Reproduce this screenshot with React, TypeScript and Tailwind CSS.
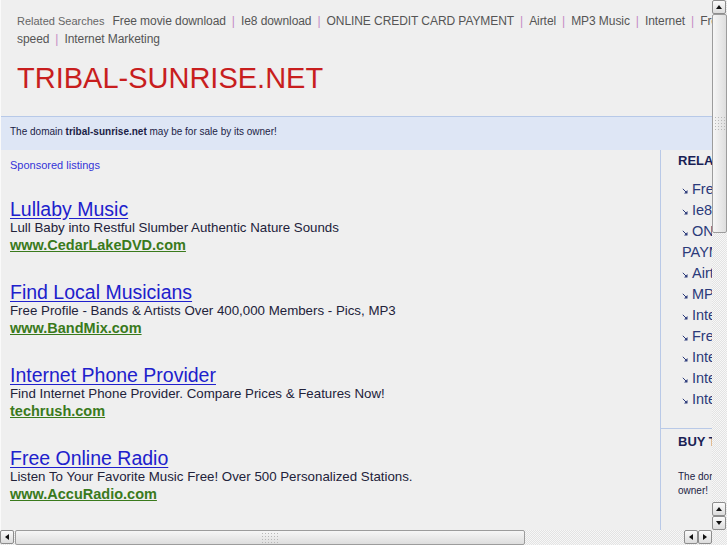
const topLinks = [
  "Free movie download",
  "Ie8 download",
  "ONLINE CREDIT CARD PAYMENT",
  "Airtel",
  "MP3 Music",
  "Internet",
  "Free internet",
];

const sideLinks = [
  "Free movie download",
  "Ie8 download",
  "ONLINE CREDIT CARD PAYMENT",
  "Airtel",
  "MP3 Music",
  "Internet",
  "Free internet speed",
  "Internet Marketing",
  "Internet Service",
  "Internet TV",
];

const ads = [
  {
    title: "Lullaby Music",
    text: "Lull Baby into Restful Slumber Authentic Nature Sounds",
    url: "www.CedarLakeDVD.com",
  },
  {
    title: "Find Local Musicians",
    text: "Free Profile - Bands & Artists Over 400,000 Members - Pics, MP3",
    url: "www.BandMix.com",
  },
  {
    title: "Internet Phone Provider",
    text: "Find Internet Phone Provider. Compare Prices & Features Now!",
    url: "techrush.com",
  },
  {
    title: "Free Online Radio",
    text: "Listen To Your Favorite Music Free! Over 500 Personalized Stations.",
    url: "www.AccuRadio.com",
  },
];

const Sep = () => <span className="px-[6px] text-[#c58cc5]">|</span>;

const Arrow = ({ dir }: { dir: "up" | "down" | "left" | "right" }) => {
  const pts = {
    up: "1,6 4,2 7,6",
    down: "1,2 4,6 7,2",
    left: "6,1 2,4 6,7",
    right: "2,1 6,4 2,7",
  }[dir];
  return (
    <div className="flex items-center justify-center w-[14px] h-[14px] rounded-[2px] border border-[#8d8d8d] bg-gradient-to-b from-[#fbfbfb] to-[#dcdcdc]">
      <svg width="8" height="8" viewBox="0 0 8 8">
        <polygon points={pts} fill="#111" />
      </svg>
    </div>
  );
};

const Grip = ({ rows, cols }: { rows: number; cols: number }) => (
  <div
    className="grid gap-[2px]"
    style={{ gridTemplateColumns: `repeat(${cols}, 1px)` }}
  >
    {Array.from({ length: rows * cols }).map((_, i) => (
      <div key={i} className="w-[1px] h-[1px] bg-[#b8b8b8]" />
    ))}
  </div>
);

const track =
  "bg-[image:repeating-conic-gradient(#e3e3e3_0_25%,#f7f7f7_0_50%)] bg-[length:2px_2px]";

const SideArrow = () => (
  <svg width="6" height="6" viewBox="0 0 6 6" className="shrink-0 mt-[-4px]">
    <line x1="0.8" y1="0.8" x2="4" y2="4" stroke="#2b3a7a" strokeWidth="1" />
    <polygon points="5.5,2 5.5,5.5 2,5.5" fill="#2b3a7a" />
  </svg>
);

export default function App() {
  return (
    <div className="w-[727px] h-[545px] flex flex-col overflow-hidden bg-[#efefef] font-['Liberation_Sans',Arial,sans-serif]">
      <div className="flex h-[530px]">
        <div className="w-[712px] shrink-0 h-[530px] overflow-hidden flex flex-col border-l border-[#fafafa]">
          {/* header */}
          <div className="w-[930px] pl-[16px] pt-[12px] pb-[21px]">
            <div className="flex items-center whitespace-nowrap leading-[18px] text-[12px] tracking-[-0.07px] text-[#555]">
              <span className="text-[11px] tracking-normal text-[#666] mr-[8px]">Related Searches</span>
              {topLinks.map((l, i) => (
                <span key={i} className="flex">
                  {i > 0 && <Sep />}
                  <span>{l}</span>
                </span>
              ))}
            </div>
            <div className="flex items-center whitespace-nowrap leading-[18px] text-[12px] tracking-[-0.07px] text-[#555]">
              <span>speed</span>
              <Sep />
              <span>Internet Marketing</span>
            </div>
            <h1 className="mt-[13px] text-[29px] leading-[34px] text-[#c81e1e]">
              TRIBAL-SUNRISE.NET
            </h1>
          </div>

          {/* domain bar */}
          <div className="w-[930px] h-[34px] border-t border-[#b7c9e8] bg-[#dee6f5] pl-[9px] pt-[8px] text-[10px] leading-[14px] text-[#1b1d45]">
            The domain <b>tribal-sunrise.net</b> may be for sale by its owner!
          </div>

          {/* main */}
          <div className="flex flex-1 w-[930px]">
            <div className="w-[659px] shrink-0 pl-[9px] pt-[7px]">
              <div className="text-[11px] leading-[16px] text-[#3434d8]">Sponsored listings</div>
              <div className="mt-[26px] flex flex-col gap-[28px]">
                {ads.map((a) => (
                  <div key={a.title} className="flex flex-col">
                    <a className="text-[19.5px] leading-[20px] text-[#2020cc] underline underline-offset-[2px]">
                      {a.title}
                    </a>
                    <div className="text-[13.3px] leading-[18px] text-[#22223a]">{a.text}</div>
                    <a className="text-[14.5px] leading-[17px] font-bold text-[#3a7a1c] underline underline-offset-[1px]">
                      {a.url}
                    </a>
                  </div>
                ))}
              </div>
            </div>

            <div className="w-[271px] shrink-0 border-l border-[#b9c9e7] flex flex-col">
              <div className="pl-[17px] pt-[3px] pb-[18px]">
                <div className="text-[13px] leading-[16px] font-bold text-[#1a1f55]">RELATED SEARCHES</div>
                <ul className="mt-[10px] pl-[4px] w-[194px]">
                  {sideLinks.map((l) => (
                    <li key={l} className="text-[14.5px] leading-[21px] text-[#2b3a7a]">
                      <span className="inline-flex items-center mr-[4px]">
                        <SideArrow />
                      </span>
                      {l}
                    </li>
                  ))}
                </ul>
              </div>
              <div className="border-t border-[#b9c9e7] pl-[17px] pt-[5px]">
                <div className="text-[13px] leading-[16px] font-bold text-[#1a1f55]">BUY THIS DOMAIN</div>
                <div className="mt-[20px] w-[235px] text-[10px] leading-[14px] text-[#1b1d45]">
                  The domain tribal-sunrise.net may be for sale by its owner!
                </div>
              </div>
            </div>
          </div>
        </div>

        {/* vertical scrollbar */}
        <div className={`w-[15px] h-[530px] flex flex-col ${track}`}>
          <Arrow dir="up" />
          <div className="h-[219px] rounded-[2px] border border-[#9c9c9c] bg-gradient-to-r from-[#f6f6f6] to-[#dedede] flex items-center justify-center">
            <Grip rows={5} cols={4} />
          </div>
          <div className="flex-1" />
          <Arrow dir="up" />
          <Arrow dir="down" />
        </div>
      </div>

      {/* horizontal scrollbar */}
      <div className="flex h-[15px]">
        <div className={`w-[712px] flex ${track}`}>
          <Arrow dir="left" />
          <div className="w-[510px] ml-[1px] rounded-[2px] border border-[#9c9c9c] bg-gradient-to-b from-[#f6f6f6] to-[#dedede] flex items-center justify-center">
            <Grip rows={4} cols={6} />
          </div>
          <div className="flex-1" />
          <Arrow dir="left" />
          <Arrow dir="right" />
        </div>
        <div className={`w-[15px] ${track}`} />
      </div>
    </div>
  );
}
